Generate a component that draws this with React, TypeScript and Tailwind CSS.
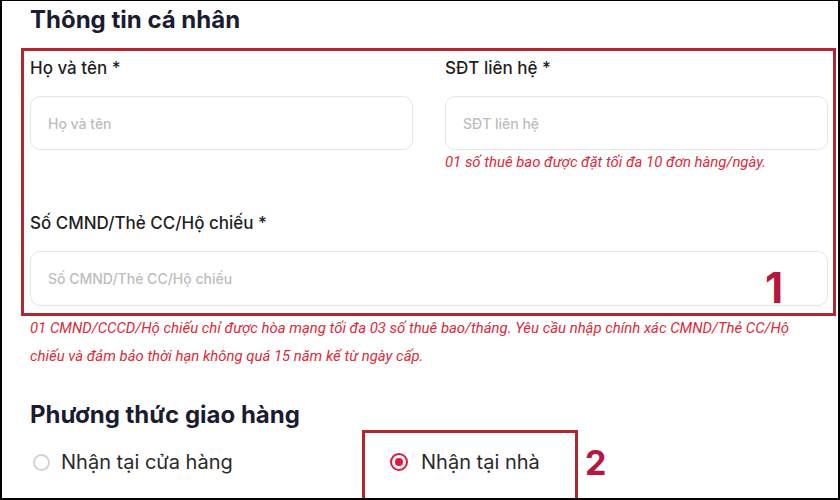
import React from 'react'

// Form section with red annotation frames (1, 2)
function Field({ label, placeholder, hint, height = 'h-[54px]' }: { label: string; placeholder: string; hint?: string; height?: string }) {
  return (
    <div className="flex flex-col">
      <label className="h-[20px] text-[17px] leading-[20px] font-medium text-[#1f1f1f]">{label}</label>
      <input
        placeholder={placeholder}
        className={`mt-[18px] ${height} w-full rounded-[10px] border border-[#e6e6e6] bg-white px-[17px] text-[14px] font-medium outline-none placeholder:text-[#bdbdbd]`}
      />
      {hint && (
        <p className="mt-[2px] text-[14.9px] leading-[20px] italic text-[#dc2a3a]" style={{ fontFamily: 'Roboto, sans-serif' }}>
          {hint}
        </p>
      )}
    </div>
  )
}

export default function App() {
  return (
    <div
      className="relative h-[500px] w-[840px] overflow-hidden border-t border-l-2 border-r-2 border-b-2 border-black bg-white"
      style={{ fontFamily: 'Inter, Roboto, "Noto Sans", sans-serif' }}
    >
      <div className="pl-[28px]">
        <h2 className="pt-[4px] text-[24px] leading-[30px] font-bold text-[#1b1c30]">Thông tin cá nhân</h2>
      </div>

      {/* Annotation 1 */}
      <div className="relative ml-[19px] mt-[13px] w-[815px] border-[3px] border-[#b3262d] pt-[7px] pr-[5px] pb-[7px] pl-[6px]">
        <div className="grid grid-cols-2 gap-x-[32px]">
          <Field label="Họ và tên *" placeholder="Họ và tên" />
          <Field label="SĐT liên hệ *" placeholder="SĐT liên hệ" hint="01 số thuê bao được đặt tối đa 10 đơn hàng/ngày." />
        </div>
        <div className="mt-[41px]">
          <Field label="Số CMND/Thẻ CC/Hộ chiếu *" placeholder="Số CMND/Thẻ CC/Hộ chiếu" height="h-[55px]" />
        </div>
        <span className="absolute left-[741px] top-[212px] text-[42px] leading-[50px] font-bold text-[#b5173f]">1</span>
      </div>

      <p
        className="-mt-[2px] pl-[28px] text-[14.9px] leading-[28px] italic text-[#dc2a3a]"
        style={{ fontFamily: 'Roboto, sans-serif' }}
      >
        01 CMND/CCCD/Hộ chiếu chỉ được hòa mạng tối đa 03 số thuê bao/tháng. Yêu cầu nhập chính xác CMND/Thẻ CC/Hộ
        <br />
        chiếu và đảm bảo thời hạn không quá 15 năm kể từ ngày cấp.
      </p>

      <h2 className="mt-[30px] pl-[28px] text-[24px] leading-[30px] font-bold text-[#1b1c30]">Phương thức giao hàng</h2>

      <div className="flex items-start">
        <div className="flex h-[64px] w-[360px] items-center pl-[31px]">
          <span className="h-[17px] w-[17px] rounded-full border-2 border-[#d4d4d4]" />
          <span className="ml-[11px] text-[20px] text-[#2a2a2a]">Nhận tại cửa hàng</span>
        </div>

        {/* Annotation 2 */}
        <div className="h-[80px] w-[216px] border-[3px] border-[#b3262d]">
          <div className="flex h-[58px] items-center pl-[25px]">
            <span className="flex h-[18px] w-[18px] items-center justify-center rounded-full border-2 border-[#e0173f]">
              <span className="h-[8px] w-[8px] rounded-full bg-[#e0173f]" />
            </span>
            <span className="ml-[13px] text-[20px] text-[#2a2a2a]">Nhận tại nhà</span>
          </div>
        </div>
        <span className="ml-[7px] flex h-[64px] items-center text-[34px] font-bold text-[#b5173f]">2</span>
      </div>
    </div>
  )
}
